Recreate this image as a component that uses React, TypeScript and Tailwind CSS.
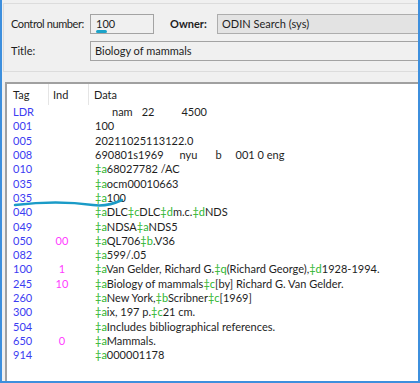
import React from "react";

type Row = { tag: string; ind?: string; data: string };

const rows: Row[] = [
  { tag: "001", data: "100" },
  { tag: "005", data: "20211025113122.0" },
  { tag: "010", data: "‡a68027782 /AC" },
  { tag: "035", data: "‡aocm00010663" },
  { tag: "035", data: "‡a100" },
  { tag: "040", data: "‡aDLC‡cDLC‡dm.c.‡dNDS" },
  { tag: "049", data: "‡aNDSA‡aNDS5" },
  { tag: "050", ind: "00", data: "‡aQL706‡b.V36" },
  { tag: "082", data: "‡a599/.05" },
  { tag: "100", ind: "1", data: "‡aVan Gelder, Richard G.‡q(Richard George),‡d1928-1994." },
  { tag: "245", ind: "10", data: "‡aBiology of mammals‡c[by] Richard G. Van Gelder." },
  { tag: "260", data: "‡aNew York,‡bScribner‡c[1969]" },
  { tag: "300", data: "‡aix, 197 p.‡c21 cm." },
  { tag: "504", data: "‡aIncludes bibliographical references." },
  { tag: "650", ind: "0", data: "‡aMammals." },
  { tag: "914", data: "‡a000001178" },
];

function Data({ text }: { text: string }) {
  if (!text.includes("‡")) return <>{text}</>;
  const parts = text.split("‡").filter(Boolean);
  return (
    <>
      {parts.map((p, i) => (
        <span key={i}>
          <span className="text-[#2fb52f]">‡{p[0]}</span>
          {p.slice(1)}
        </span>
      ))}
    </>
  );
}

function Line({ tag, ind, children }: { tag: string; ind?: string; children: React.ReactNode }) {
  return (
    <div className="flex h-[14.3px] items-center whitespace-nowrap leading-[14px]">
      <div className="w-[42px] pl-[6px] text-[#3c3cf2]">{tag}</div>
      <div className="w-[40px] pl-[4px] text-[#ff3cff]">
        <span className="inline-block w-[18px] text-center">{ind}</span>
      </div>
      <div className="pl-[6px] text-[#1e1e1e]">{children}</div>
    </div>
  );
}

export default function App() {
  return (
    <div
      className="relative flex h-[383px] w-[420px] flex-col overflow-hidden border-x-2 border-b-2 border-[#3d8fdd] bg-[#f0f0f0] text-[11px] leading-[14px] text-[#1e1e1e]"
      style={{ fontFamily: 'Lato, "Noto Sans", sans-serif' }}
    >
      {/* Header group */}
      <div className="ml-px mt-[3px] h-[69px] whitespace-nowrap border border-r-0 border-[#dcdcdc] pl-[7px] pt-[10px]">
        <div className="flex h-[20px] items-center">
          <div className="w-[79px] tracking-[-0.4px]">Control number:</div>
          <div className="relative flex h-[20px] w-[64px] items-center border border-[#a3a3a3] bg-[#f0f0f0] pl-[5px]">
            100
            <span className="absolute left-[5px] top-[15px] h-[3px] w-[11px] rounded-full bg-[#1ba3c9]" />
          </div>
          <div className="ml-[16px] w-[47px] font-bold">Owner:</div>
          <div className="flex h-[20px] flex-1 items-center border border-r-0 border-[#adadad] bg-[#e3e3e3] pl-[4px]">
            ODIN Search (sys)
          </div>
        </div>
        <div className="mt-[7px] flex h-[20px] items-center">
          <div className="w-[79px]">Title:</div>
          <div className="flex h-[20px] flex-1 items-center border border-r-0 border-[#a3a3a3] bg-[#f0f0f0] pl-[4px]">
            Biology of mammals
          </div>
        </div>
      </div>

      {/* MARC list */}
      <div className="relative ml-[3px] mt-[10px] flex-1 border-l-2 border-t-2 border-[#a0a0a0] bg-white">
        <div className="flex h-[21px] items-center">
          <div className="flex h-full w-[42px] items-center border-r border-[#e5e5e5] pl-[6px]">Tag</div>
          <div className="flex h-full w-[40px] items-center border-r border-[#e5e5e5] pl-[4px]">Ind</div>
          <div className="pl-[5px]">Data</div>
        </div>
        <Line tag="LDR">
          <span className="whitespace-pre">
            <span className="ml-[17px]">nam</span>
            <span className="ml-[9px]">22</span>
            <span className="ml-[27px]">4500</span>
          </span>
        </Line>
        {rows.slice(0, 2).map((r, i) => (
          <Line key={i} tag={r.tag} ind={r.ind}>
            <Data text={r.data} />
          </Line>
        ))}
        <Line tag="008">
          <span>690801s1969</span>
          <span className="ml-[16px]">nyu</span>
          <span className="ml-[18px]">b</span>
          <span className="ml-[14px]">001 0 eng</span>
        </Line>
        {rows.slice(2).map((r, i) => (
          <Line key={i} tag={r.tag} ind={r.ind}>
            <Data text={r.data} />
          </Line>
        ))}

        {/* hand-drawn annotation */}
        <svg className="pointer-events-none absolute left-0 top-0" width="200" height="140">
          <path
            d="M8 121 Q 50 116 86 121 Q 100 123 115 116"
            fill="none"
            stroke="#1a9bc7"
            strokeWidth="2.5"
            strokeLinecap="round"
          />
        </svg>
      </div>
    </div>
  );
}
